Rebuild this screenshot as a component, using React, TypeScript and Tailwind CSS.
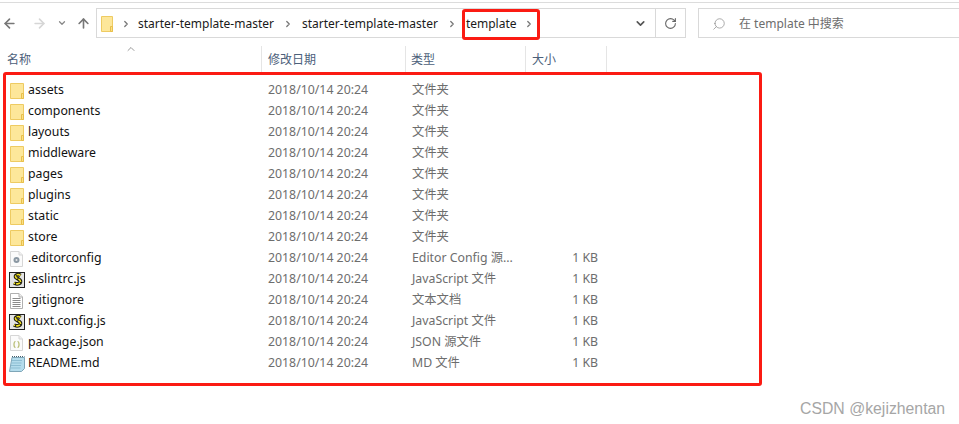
import { ChevronRight, ChevronDown, ChevronUp, ArrowLeft, ArrowRight, ArrowUp, RotateCw, Search } from 'lucide-react'

type Row = { name: string; type: string; size?: string; icon: 'folder' | 'config' | 'js' | 'text' | 'json' | 'md' }

const ROWS: Row[] = [
  { name: 'assets', type: '文件夹', icon: 'folder' },
  { name: 'components', type: '文件夹', icon: 'folder' },
  { name: 'layouts', type: '文件夹', icon: 'folder' },
  { name: 'middleware', type: '文件夹', icon: 'folder' },
  { name: 'pages', type: '文件夹', icon: 'folder' },
  { name: 'plugins', type: '文件夹', icon: 'folder' },
  { name: 'static', type: '文件夹', icon: 'folder' },
  { name: 'store', type: '文件夹', icon: 'folder' },
  { name: '.editorconfig', type: 'Editor Config 源...', size: '1 KB', icon: 'config' },
  { name: '.eslintrc.js', type: 'JavaScript 文件', size: '1 KB', icon: 'js' },
  { name: '.gitignore', type: '文本文档', size: '1 KB', icon: 'text' },
  { name: 'nuxt.config.js', type: 'JavaScript 文件', size: '1 KB', icon: 'js' },
  { name: 'package.json', type: 'JSON 源文件', size: '1 KB', icon: 'json' },
  { name: 'README.md', type: 'MD 文件', size: '1 KB', icon: 'md' },
]

function FolderIcon({ width = 12 }: { width?: number }) {
  return (
    <svg width={width} height="16" viewBox={`0 0 ${width} 16`} className="shrink-0">
      <path d={`M.5.5h${width - 1}v15H.5z`} fill="#fde79a" stroke="#eecb62" />
      <path d={`M${width - 2.500} 10.500h2v5h-2z`} fill="#fbe083" stroke="#e8bf4c" />
    </svg>
  )
}

function FileIcon({ kind }: { kind: Row['icon'] }) {
  if (kind === 'folder') return <FolderIcon width={14} />
  if (kind === 'js') {
    return (
      <svg width="16" height="16" viewBox="0 0 16 16" className="shrink-0">
        <rect x=".5" y=".5" width="15" height="15" fill="#e4e4e4" stroke="#222" />
        <path d="M11.500 3.500c-2-1.500-5-1-5 1 0 2.500 5 2 5 5 0 2.500-4 3-6.500 1.500" fill="none" stroke="#1c1c10" strokeWidth="3.600" />
        <path d="M11.500 3.500c-2-1.500-5-1-5 1 0 2.500 5 2 5 5 0 2.500-4 3-6.500 1.500" fill="none" stroke="#f2e21e" strokeWidth="1.600" strokeDasharray="4 1" />
      </svg>
    )
  }
  if (kind === 'md') {
    return (
      <svg width="16" height="16" viewBox="0 0 16 16" className="shrink-0">
        <path d="M3 1.500h12.500v11l-3 3H.5z" fill="#b4dcec" stroke="#7fa6b8" />
        <path d="M3 .5h12.500" stroke="#44606e" strokeDasharray="1 1" />
        <path d="M3 4.500h10M2.500 7h10M2 9.500h10M1.500 12h10" stroke="#8dbdd2" />
      </svg>
    )
  }
  if (kind === 'text') {
    return (
      <svg width="13" height="16" viewBox="0 0 13 16" className="shrink-0">
        <path d="M.5.5h8.500l3.500 3.500v11.500H.5z" fill="#fff" stroke="#b0b0b0" />
        <path d="M9 .5V4h3.500" fill="#eee" stroke="#b0b0b0" />
        <path d="M2.500 5.500h8M2.500 7.500h8M2.500 9.500h8M2.500 11.500h8M2.500 13.500h8" stroke="#8a8a8a" />
      </svg>
    )
  }
  return (
    <svg width="13" height="16" viewBox="0 0 13 16" className="shrink-0">
      <path d="M.5.5h8.500l3.500 3.500v11.500H.5z" fill="#fbfbfb" stroke="#d6d6d6" />
      <path d="M9 .5V4h3.500" fill="#f0f0f0" stroke="#d6d6d6" />
      {kind === 'config' && (
        <>
          <circle cx="6.500" cy="9" r="3" fill="#8b98a3" />
          <circle cx="6.500" cy="9" r="1" fill="#e8e8e8" />
        </>
      )}
      {kind === 'json' && <path d="M5.500 6.500c-1.500 0-1.500 1-1.500 3s0 3 1.500 3M7.500 6.500c1.500 0 1.500 1 1.500 3s0 3-1.500 3" fill="none" stroke="#b6bb70" strokeWidth="1.200" />}
    </svg>
  )
}

function Crumb({ label, gap = 'mx-[9px]' }: { label: string; gap?: string }) {
  return (
    <>
      <span className="text-[#1a1a1a]">{label}</span>
      <ChevronRight size={10} strokeWidth={3} className={`${gap} text-[#777]`} />
    </>
  )
}

export default function App() {
  return (
    <div className="relative w-[959px] h-[424px] overflow-hidden bg-white text-[12px] font-['Noto_Sans','Noto_Sans_CJK_SC',sans-serif]">
      <div className="h-[3px] border-b border-[#dcdcdc]" />

      {/* toolbar */}
      <div className="flex items-center h-[30px] mt-[5px]">
        <div className="flex items-center w-[96px] shrink-0 pl-[2px]">
          <ArrowLeft size={15} strokeWidth={2.600} className="text-[#777]" />
          <ArrowRight size={15} strokeWidth={2.600} className="ml-[15px] text-[#d6d6d6]" />
          <ChevronDown size={10} strokeWidth={3} className="ml-[10px] text-[#888]" />
          <ArrowUp size={15} strokeWidth={2.600} className="ml-[9px] text-[#777]" />
        </div>
        <div className="flex items-center w-[590px] h-full border border-[#d9d9d9]">
          <div className="flex items-center flex-1 pl-[4px] pt-[1px]">
            <FolderIcon />
            <ChevronRight size={10} strokeWidth={3} className="ml-[8px] mr-[7px] text-[#777]" />
            <Crumb label="starter-template-master" />
            <Crumb label="starter-template-master" />
            <Crumb label="template" gap="mx-[7px]" />
          </div>
          <ChevronDown size={13} strokeWidth={3} className="mr-[8px] text-[#555]" />
          <div className="flex items-center justify-center w-[30px] h-full border-l border-[#d9d9d9]">
            <RotateCw size={13} strokeWidth={2} className="text-[#666]" />
          </div>
        </div>
        <div className="flex items-center flex-1 h-full ml-[12px] pl-[13px] pt-[1px] border border-r-0 border-[#d9d9d9] text-[#6d6d6d]">
          <Search size={14} strokeWidth={1.200} className="-scale-x-100 text-[#888]" />
          <span className="ml-[13px]">在 template 中搜索</span>
        </div>
      </div>

      {/* column headers */}
      <div className="relative flex h-[26px] mt-[8px] text-[#4c607a]">
        <ChevronUp size={12} strokeWidth={1.500} className="absolute left-[125px] -top-[3px] text-[#777]" />
        <div className="flex items-center w-[262px] pl-[7px] pt-[1px] border-r border-[#e5e5e5]">名称</div>
        <div className="flex items-center w-[144px] pl-[6px] pt-[1px] border-r border-[#e5e5e5]">修改日期</div>
        <div className="flex items-center w-[120px] pl-[5px] pt-[1px] border-r border-[#e5e5e5]">类型</div>
        <div className="flex items-center w-[81px] pl-[6px] pt-[1px] border-r border-[#e5e5e5]">大小</div>
      </div>

      {/* file rows */}
      <div className="mt-[8px] text-[12.3px]">
        {ROWS.map(r => (
          <div key={r.name} className="flex items-center h-[21px]">
            <div className="flex items-center w-[268px] pl-[9px]">
              <div className="flex justify-center w-[15px]">
                <FileIcon kind={r.icon} />
              </div>
              <span className="ml-[4px] text-[#111]">{r.name}</span>
            </div>
            <span className="w-[144px] text-[#6d6d6d]">2018/10/14 20:24</span>
            <span className="w-[140px] text-[#6d6d6d]">{r.type}</span>
            <span className="w-[46px] text-right text-[#6d6d6d]">{r.size}</span>
          </div>
        ))}
      </div>

      {/* red annotations */}
      <div className="absolute left-[462px] top-[9px] w-[78px] h-[31px] rounded-[3px] border-[3px] border-[#fb1b13]" />
      <div className="absolute left-[3px] top-[72px] w-[759px] h-[314px] rounded-[3px] border-[3px] border-[#fb1b13]" />

      <span className="absolute left-[800px] top-[397px] text-[15.8px] text-[#a6a6a6] font-['Liberation_Sans',sans-serif]">CSDN @kejizhentan</span>
    </div>
  )
}
